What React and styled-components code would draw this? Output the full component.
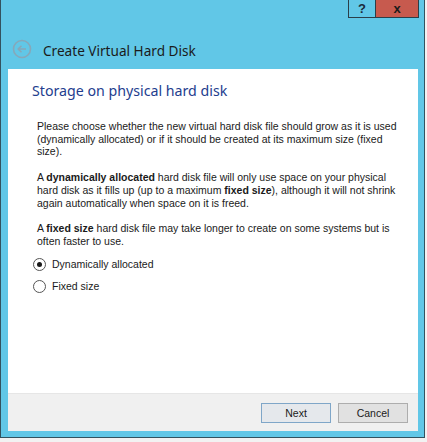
import React, { useState } from "react";
import styled, { createGlobalStyle } from "styled-components";

const GlobalStyle = createGlobalStyle`
  html, body {
    margin: 0;
    padding: 0;
    background: #f2f2f2;
  }
  body {
    width: 427px;
    height: 442px;
    overflow: hidden;
  }
`;

const Window = styled.div`
  width: 423px;
  height: 437px;
  background: #61c7e7;
  border-left: 1px solid #33525f;
  border-right: 1px solid #33525f;
  border-bottom: 1px solid #33525f;
  display: flex;
  flex-direction: column;
  position: relative;
`;

const Caption = styled.div`
  position: absolute;
  top: 0;
  right: 5px;
  display: flex;
`;

const CaptionButton = styled.div`
  height: 18px;
  width: ${(p) => p.$w}px;
  box-sizing: border-box;
  background: ${(p) => p.$bg};
  border: 1px solid #2a3f4a;
  border-top: none;
  border-left: ${(p) => (p.$first ? "1px solid #2a3f4a" : "none")};
  display: flex;
  align-items: center;
  justify-content: center;
  font-family: "Liberation Sans", Arial, sans-serif;
  font-weight: bold;
  font-size: 13px;
  color: ${(p) => p.$fg};
`;

const Header = styled.div`
  height: 69px;
  display: flex;
  align-items: flex-end;
  padding: 0 0 0 11px;
  box-sizing: border-box;
`;

const HeaderRow = styled.div`
  display: flex;
  align-items: center;
  gap: 11px;
  height: 20px;
  margin-bottom: 10px;
`;

const Title = styled.div`
  font-family: "Noto Sans", "Open Sans", sans-serif;
  font-size: 13.6px;
  color: #1b1b1b;
  margin-top: 3px;
`;

const Panel = styled.div`
  margin: 0 6px 0 7px;
  height: 362px;
  display: flex;
  flex-direction: column;
`;

const Content = styled.div`
  flex: 1;
  background: #ffffff;
  padding: 12px 20px 0 24px;
`;

const Heading = styled.div`
  font-family: "Noto Sans", "Open Sans", sans-serif;
  font-size: 14.2px;
  color: #233d8e;
  margin-bottom: 20px;
`;

const Text = styled.p`
  margin: 0 0 13px 5px;
  font-family: "Liberation Sans", Tahoma, sans-serif;
  font-size: 10.5px;
  line-height: 12.7px;
  color: #1a1a1a;
  b {
    font-weight: bold;
  }
  &:last-of-type {
    margin-bottom: 10px;
  }
`;

const RadioRow = styled.label`
  display: flex;
  align-items: center;
  gap: 6px;
  margin: 0 0 9px 1px;
  height: 13px;
  font-family: "Liberation Sans", Tahoma, sans-serif;
  font-size: 10.5px;
  color: #1a1a1a;
  cursor: default;
`;

const RadioCircle = styled.span`
  width: 11px;
  height: 11px;
  border-radius: 50%;
  border: 1px solid #555;
  background: #fff;
  display: flex;
  align-items: center;
  justify-content: center;
  &::after {
    content: "";
    width: 5px;
    height: 5px;
    border-radius: 50%;
    background: ${(p) => (p.$on ? "#1a1a1a" : "transparent")};
  }
`;

const Footer = styled.div`
  height: 38px;
  box-sizing: border-box;
  background: #f0f0f0;
  border-top: 1px solid #e6e6e6;
  display: flex;
  justify-content: flex-end;
  align-items: flex-start;
  padding: 9px 10px 0 0;
  gap: 7px;
`;

const Button = styled.button`
  width: 70px;
  height: 20px;
  box-sizing: border-box;
  background: ${(p) => (p.$default ? "#e5e8ec" : "#e1e1e1")};
  border: 1px solid ${(p) => (p.$default ? "#7fa6c8" : "#adadad")};
  font-family: "Liberation Sans", Tahoma, sans-serif;
  font-size: 10.5px;
  color: #1a1a1a;
  padding: 0;
`;

const BackIcon = () => (
  <svg width="20" height="20" viewBox="0 0 20 20">
    <circle cx="10" cy="10" r="8.5" fill="none" stroke="#86a8ba" strokeWidth="1.6" />
    <path d="M14 10H6.5M9.5 6.8L6.2 10l3.3 3.2" fill="none" stroke="#86a8ba" strokeWidth="1.6" />
  </svg>
);

export default function App() {
  const [mode, setMode] = useState("dynamic");

  return (
    <>
      <GlobalStyle />
      <Window>
        <Caption>
          <CaptionButton $w={28} $bg="#61c7e7" $fg="#1b2b3a" $first>
            ?
          </CaptionButton>
          <CaptionButton $w={43} $bg="#c75a4e" $fg="#1b1b1b">
            x
          </CaptionButton>
        </Caption>
        <Header>
          <HeaderRow>
            <BackIcon />
            <Title>Create Virtual Hard Disk</Title>
          </HeaderRow>
        </Header>
        <Panel>
          <Content>
            <Heading>Storage on physical hard disk</Heading>
            <Text>
              Please choose whether the new virtual hard disk file should grow as it is used
              (dynamically allocated) or if it should be created at its maximum size (fixed
              size).
            </Text>
            <Text>
              A <b>dynamically allocated</b> hard disk file will only use space on your physical
              hard disk as it fills up (up to a maximum <b>fixed size</b>), although it will not
              shrink again automatically when space on it is freed.
            </Text>
            <Text>
              A <b>fixed size</b> hard disk file may take longer to create on some systems but is
              often faster to use.
            </Text>
            <RadioRow onClick={() => setMode("dynamic")}>
              <RadioCircle $on={mode === "dynamic"} />
              Dynamically allocated
            </RadioRow>
            <RadioRow onClick={() => setMode("fixed")}>
              <RadioCircle $on={mode === "fixed"} />
              Fixed size
            </RadioRow>
          </Content>
          <Footer>
            <Button $default>Next</Button>
            <Button>Cancel</Button>
          </Footer>
        </Panel>
      </Window>
    </>
  );
}
